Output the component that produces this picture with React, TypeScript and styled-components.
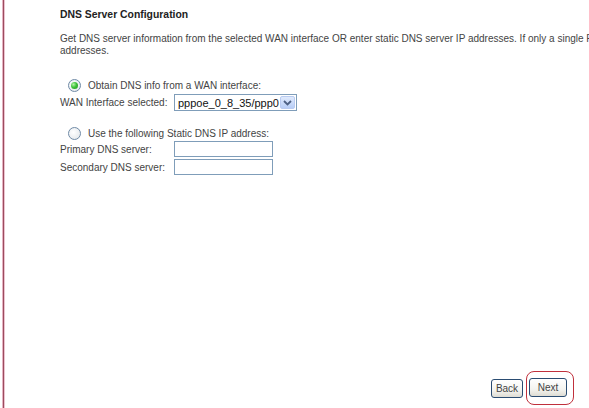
import React from "react";
import styled, { createGlobalStyle } from "styled-components";

const GlobalStyle = createGlobalStyle`
  html, body {
    margin: 0;
    padding: 0;
    background: #ffffff;
  }
  body {
    font-family: "Liberation Sans", Arial, sans-serif;
    font-size: 10px;
    color: #444444;
  }
`;

const Page = styled.div`
  width: 589px;
  height: 408px;
  box-sizing: border-box;
  overflow: hidden;
  padding-left: 3px;
`;

const Frame = styled.div`
  height: 100%;
  box-sizing: border-box;
  border-left: 1px solid #9c4c5e;
  box-shadow: -1px 0 0 #e6b3c3, inset 1px 0 0 #ecc3d0;
  display: flex;
  flex-direction: column;
  padding: 9px 15px 3px 56px;
`;

const Title = styled.div`
  font-weight: bold;
  font-size: 10.4px;
  color: #222;
  line-height: 12px;
  margin-bottom: 12px;
`;

const Intro = styled.div`
  line-height: 12px;
  margin-right: -20px;
`;

const IntroLine = styled.div`
  white-space: nowrap;
`;

const OptionRow = styled.label<{ top: number }>`
  display: flex;
  align-items: center;
  gap: 7px;
  padding-left: 8px;
  height: 14px;
  white-space: nowrap;
  margin-top: ${(p) => p.top}px;
`;

const Radio = styled.span<{ checked?: boolean }>`
  width: 11px;
  height: 11px;
  border-radius: 50%;
  border: 1px solid #6f8aa6;
  background: radial-gradient(circle at 40% 40%, #ffffff 0%, #e9ecef 70%, #d4d8dc 100%);
  display: flex;
  align-items: center;
  justify-content: center;
  &::after {
    content: "";
    display: ${(p) => (p.checked ? "block" : "none")};
    width: 7px;
    height: 7px;
    border-radius: 50%;
    background: radial-gradient(circle at 35% 35%, #b6f3a8 0%, #3fc23a 45%, #1f8f1e 100%);
  }
`;

const FieldRow = styled.div<{ top: number }>`
  display: grid;
  grid-template-columns: 114px auto;
  align-items: center;
  white-space: nowrap;
  margin-top: ${(p) => p.top}px;
`;

const FakeSelect = styled.div`
  width: 123px;
  height: 17px;
  box-sizing: border-box;
  border: 1px solid #7f9db9;
  display: flex;
  align-items: center;
  padding-left: 3px;
  font-size: 11px;
  color: #111;
  background: #fff;
`;

const SelectValue = styled.span`
  flex: 1;
  overflow: hidden;
`;

const ArrowBtn = styled.span`
  width: 15px;
  height: 13px;
  margin-right: 1px;
  box-sizing: border-box;
  border: 1px solid #b9cbf1;
  border-radius: 2px;
  background: linear-gradient(#e0eafc, #b7cdf7);
  display: flex;
  align-items: center;
  justify-content: center;
`;

const TextInput = styled.input`
  width: 99px;
  height: 16px;
  box-sizing: border-box;
  border: 1px solid #7f9db9;
  padding: 0 2px;
  font-family: inherit;
  font-size: 10px;
  outline: none;
`;

const Actions = styled.div`
  margin-top: auto;
  display: flex;
  justify-content: flex-end;
  align-items: center;
  gap: 3px;
`;

const Button = styled.button<{ w: number }>`
  width: ${(p) => p.w}px;
  height: 19px;
  box-sizing: border-box;
  border: 1px solid #2a4c72;
  border-radius: 3px;
  background: linear-gradient(#ffffff 0%, #f4f4f0 60%, #dedcd3 100%);
  font-family: inherit;
  font-size: 10px;
  color: #444;
  padding: 0;
`;

const Highlight = styled.span`
  display: inline-flex;
  border: 1px solid #c0303c;
  border-radius: 8px;
  padding: 6px 6px 7px 2px;
`;

export default function App() {
  return (
    <Page>
      <GlobalStyle />
      <Frame>
        <Title>DNS Server Configuration</Title>
        <Intro>
          <IntroLine>
            Get DNS server information from the selected WAN interface OR enter static DNS server IP addresses. If only a single P
          </IntroLine>
          <IntroLine>addresses.</IntroLine>
        </Intro>

        <OptionRow top={21}>
          <Radio checked />
          <span>Obtain DNS info from a WAN interface:</span>
        </OptionRow>
        <FieldRow top={2}>
          <span>WAN Interface selected:</span>
          <FakeSelect>
            <SelectValue>pppoe_0_8_35/ppp0</SelectValue>
            <ArrowBtn>
              <svg width="9" height="6" viewBox="0 0 9 6">
                <path d="M1 1 L4.5 4.5 L8 1" fill="none" stroke="#4d6185" strokeWidth="1.8" />
              </svg>
            </ArrowBtn>
          </FakeSelect>
        </FieldRow>

        <OptionRow top={15}>
          <Radio />
          <span>Use the following Static DNS IP address:</span>
        </OptionRow>
        <FieldRow top={1}>
          <span>Primary DNS server:</span>
          <TextInput />
        </FieldRow>
        <FieldRow top={2}>
          <span>Secondary DNS server:</span>
          <TextInput />
        </FieldRow>

        <Actions>
          <Button w={32}>Back</Button>
          <Highlight>
            <Button w={38}>Next</Button>
          </Highlight>
        </Actions>
      </Frame>
    </Page>
  );
}
